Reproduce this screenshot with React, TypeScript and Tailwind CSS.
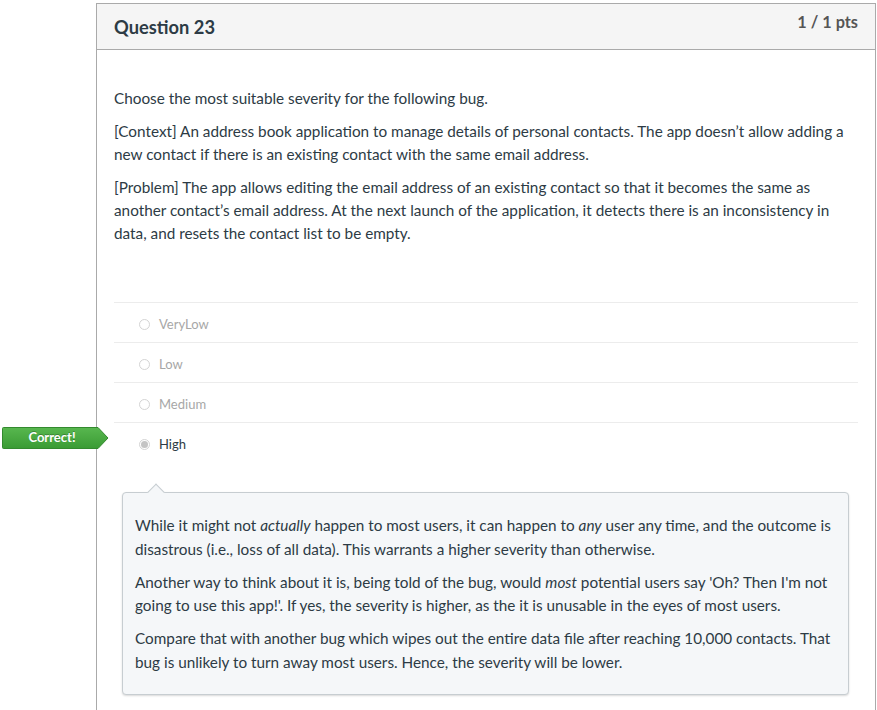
import React from "react";

const answers = [
  { label: "VeryLow", selected: false },
  { label: "Low", selected: false },
  { label: "Medium", selected: false },
  { label: "High", selected: true },
];

const Radio = ({ checked }: { checked: boolean }) => (
  <span className="flex h-[11px] w-[11px] items-center justify-center rounded-full border border-[#d4d4d4] bg-white">
    {checked && <span className="h-[7px] w-[7px] rounded-full bg-[#c4c4c4]" />}
  </span>
);

const CorrectBadge = () => (
  <div className="absolute left-[-112px] top-[4px] h-[22px] w-[107px]">
    <svg width="107" height="22" viewBox="0 0 107 22" className="absolute inset-0">
      <defs>
        <linearGradient id="g" x1="0" y1="0" x2="0" y2="1">
          <stop offset="0" stopColor="#58b74f" />
          <stop offset="1" stopColor="#3a9b34" />
        </linearGradient>
      </defs>
      <path d="M1.5 0.5 H96 L106 11 L96 21.5 H1.5 Q0.5 21.5 0.5 20.5 V1.5 Q0.5 0.5 1.5 0.5 Z" fill="url(#g)" stroke="#338a2e" />
    </svg>
    <span className="relative flex h-full w-[100px] items-center justify-center pb-[2px] text-[13px] font-bold text-white [text-shadow:0_-1px_0_rgba(0,0,0,0.25)]">
      Correct!
    </span>
  </div>
);

export default function App() {
  return (
    <div className="min-h-[710px] bg-white pl-[96px] pt-[3px] font-['Lato','Noto_Sans',sans-serif] text-[#2d3b45]">
      <div className="w-[780px] min-h-[720px] border border-[#aaaaaa] border-b-0">
        <div className="flex h-[46px] items-center justify-between border-b border-[#aaaaaa] bg-[#f5f5f5] px-[17px]">
          <h2 className="mt-[2px] text-[18.3px] font-bold">Question 23</h2>
          <span className="mb-[8px] text-[16.3px] font-bold text-[#555]">1 / 1 pts</span>
        </div>
        <div className="px-[17px] pt-[37px] text-[15.3px] leading-[23px]">
          <p className="mb-[10px]">Choose the most suitable severity for the following bug.</p>
          <p className="mb-[10px]">
            [Context] An address book application to manage details of personal contacts. The app doesn’t allow adding a new contact if there is an existing contact with the same email address.
          </p>
          <p>
            [Problem] The app allows editing the email address of an existing contact so that it becomes the same as another contact’s email address. At the next launch of the application, it detects there is an inconsistency in data, and resets the contact list to be empty.
          </p>

          <div className="mt-[57px]">
            {answers.map((a) => (
              <div key={a.label} className="relative flex h-[40px] items-center gap-[9px] border-t border-[#ececec] pl-[25px] pt-[4px]">
                {a.selected && <CorrectBadge />}
                <Radio checked={a.selected} />
                <span className={a.selected ? "text-[13px] text-[#2d3b45]" : "text-[13px] text-[#a7a7a7]"}>
                  {a.label}
                </span>
              </div>
            ))}
          </div>

          <div className="relative ml-[8px] mr-[9px] mt-[30px] rounded-[4px] border border-[#c7cdd1] bg-[#f5f7f9] px-[12px] pb-[20px] pt-[21px] leading-[23.5px] shadow-[0_1px_2px_rgba(0,0,0,0.15)]">
            <span className="absolute left-[27px] top-[-7px] h-[12px] w-[12px] rotate-45 border-l border-t border-[#c7cdd1] bg-[#f5f7f9]" />
            <p className="mb-[9.5px]">
              While it might not <em>actually</em> happen to most users, it can happen to <em>any</em> user any time, and the outcome is disastrous (i.e., loss of all data). This warrants a higher severity than otherwise.
            </p>
            <p className="mb-[9.5px]">
              Another way to think about it is, being told of the bug, would <em>most</em> potential users say 'Oh? Then I'm not going to use this app!'. If yes, the severity is higher, as the it is unusable in the eyes of most users.
            </p>
            <p>
              Compare that with another bug which wipes out the entire data file after reaching 10,000 contacts. That bug is unlikely to turn away most users. Hence, the severity will be lower.
            </p>
          </div>
        </div>
      </div>
    </div>
  );
}
